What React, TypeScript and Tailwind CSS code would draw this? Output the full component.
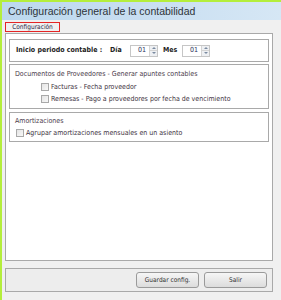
import React from "react";

const font = { fontFamily: '"DejaVu Sans Condensed", "DejaVu Sans", Verdana, sans-serif' };

function Spinner({ value }: { value: string }) {
  return (
    <div className="flex h-[12px] w-[28px] items-center border border-[#c6c6c6] bg-white">
      <span className="flex-1 pl-[7px] text-[7px] leading-none text-[#2b2b5a]">{value}</span>
      <div className="flex h-full w-[8px] flex-col border-l border-[#d4d4d4] bg-[#eef0f3]">
        <div className="flex flex-1 items-center justify-center">
          <span className="h-0 w-0 border-x-[2px] border-b-[2px] border-x-transparent border-b-[#7a8aa0]" />
        </div>
        <div className="flex flex-1 items-center justify-center border-t border-[#d4d4d4]">
          <span className="h-0 w-0 border-x-[2px] border-t-[2px] border-x-transparent border-t-[#7a8aa0]" />
        </div>
      </div>
    </div>
  );
}

function Check({ label }: { label: string }) {
  return (
    <div className="flex items-center gap-[2px]">
      <span className="h-[8px] w-[8px] border border-[#a9a9a9] bg-gradient-to-br from-[#e4e4e4] to-[#f8f8f8]" />
      <span className="text-[7px] leading-none text-[#3e323e]">{label}</span>
    </div>
  );
}

export default function App() {
  return (
    <div
      className="flex h-[300px] w-[281px] flex-col border-l-2 border-t-2 border-[#b4ee3c] bg-[#f0f0f0]"
      style={font}
    >
      {/* Title bar */}
      <div className="flex h-[18px] items-center bg-gradient-to-r from-[#bcd8ee] via-[#c8def1] to-[#d6e7f5] pl-[6px]">
        <span className="font-['Liberation_Sans',Arial,sans-serif] text-[10.5px] leading-none text-[#2e3338]">
          Configuración general de la contabilidad
        </span>
      </div>

      <div className="ml-[3px] mr-[8px] flex flex-1 flex-col">
        {/* Tab */}
        <div className="mt-[2px] flex h-[10px] w-[55px] items-center justify-center border border-[#e42525]">
          <span className="text-[6.5px] leading-none text-[#2a2a4a]">Configuración</span>
        </div>

        {/* Main panel */}
        <div className="mt-[1px] flex h-[228px] flex-col gap-[2px] border border-[#a9a9a9] bg-white px-[3px] pt-[5px]">
          <div className="flex h-[23px] items-center border border-[#a9a9a9] pl-[6px]">
            <span className="w-[94px] text-[7px] font-bold leading-none text-[#222]">Inicio periodo contable :</span>
            <span className="w-[20px] text-[7px] font-bold leading-none text-[#222]">Día</span>
            <Spinner value="01" />
            <span className="ml-[5px] w-[19px] text-[7px] font-bold leading-none text-[#222]">Mes</span>
            <Spinner value="01" />
          </div>

          <div className="flex h-[45px] flex-col border border-[#a9a9a9] pl-[5px] pt-[6px]">
            <span className="text-[7px] leading-none text-[#4a3a4a]">
              Documentos de Proveedores - Generar apuntes contables
            </span>
            <div className="mt-[5px] flex flex-col gap-[4px] pl-[26px]">
              <Check label="Facturas - Fecha proveedor" />
              <Check label="Remesas - Pago a proveedores por fecha de vencimiento" />
            </div>
          </div>

          <div className="mt-[1px] flex h-[30px] flex-col border border-[#a9a9a9] pl-[5px] pt-[5px]">
            <span className="text-[7px] leading-none text-[#4a3a4a]">Amortizaciones</span>
            <div className="mt-[4px] pl-[1px]">
              <Check label="Agrupar amortizaciones mensuales en un asiento" />
            </div>
          </div>
        </div>

        {/* Bottom bar */}
        <div className="mt-[7px] flex h-[24px] items-center justify-end gap-[5px] border border-[#a9a9a9] bg-[#ededed] pr-[5px]">
          <button className="flex h-[16px] w-[63px] items-center justify-center rounded-[3px] border border-[#9a9a9a] bg-gradient-to-b from-[#f6f6f6] to-[#dcdcdc] text-[6.5px] leading-none text-[#333]">
            Guardar config.
          </button>
          <button className="flex h-[16px] w-[63px] items-center justify-center rounded-[3px] border border-[#9a9a9a] bg-gradient-to-b from-[#f6f6f6] to-[#dcdcdc] text-[6.5px] leading-none text-[#333]">
            Salir
          </button>
        </div>
      </div>
    </div>
  );
}
